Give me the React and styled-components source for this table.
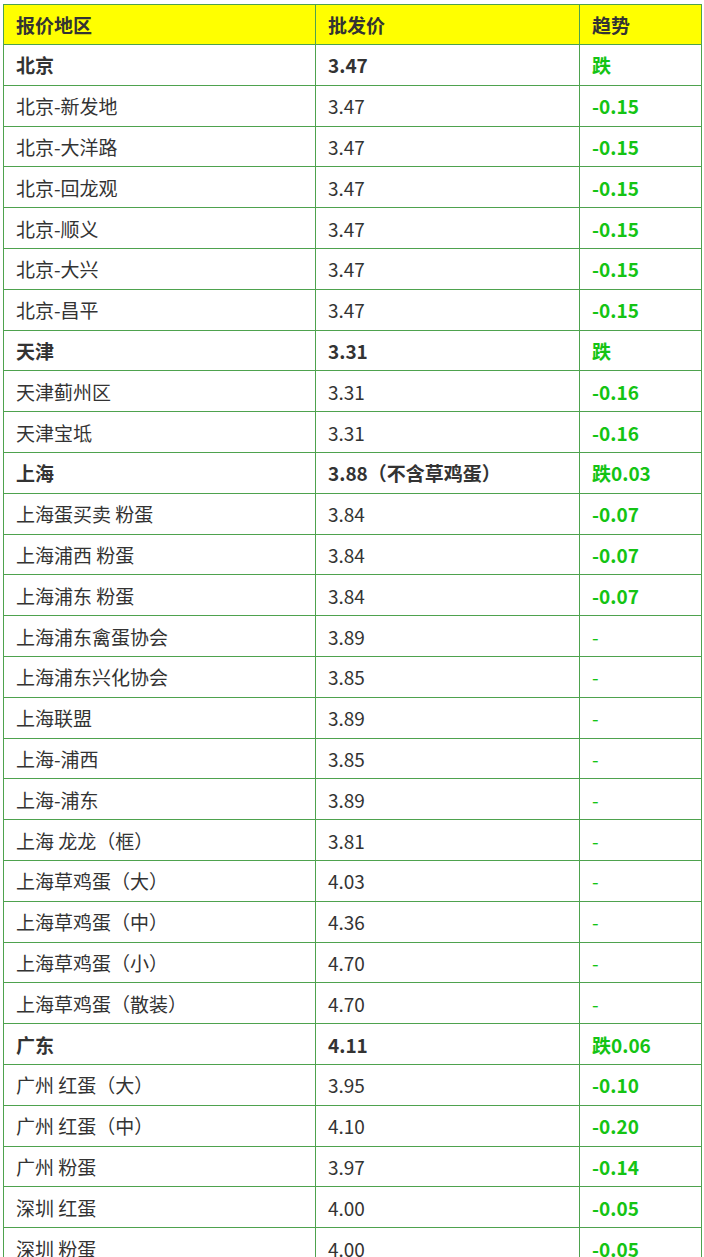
import React from 'react';
import styled, { createGlobalStyle } from 'styled-components';

const GlobalStyle = createGlobalStyle`
	body {
		margin: 0;
		background: #fff;
		font-family: "Noto Sans CJK SC", "Noto Sans", sans-serif;
	}
`;

const rows = [
	{ area: '北京', price: '3.47', trend: '跌', group: true },
	{ area: '北京-新发地', price: '3.47', trend: '-0.15' },
	{ area: '北京-大洋路', price: '3.47', trend: '-0.15' },
	{ area: '北京-回龙观', price: '3.47', trend: '-0.15' },
	{ area: '北京-顺义', price: '3.47', trend: '-0.15' },
	{ area: '北京-大兴', price: '3.47', trend: '-0.15' },
	{ area: '北京-昌平', price: '3.47', trend: '-0.15' },
	{ area: '天津', price: '3.31', trend: '跌', group: true },
	{ area: '天津蓟州区', price: '3.31', trend: '-0.16' },
	{ area: '天津宝坻', price: '3.31', trend: '-0.16' },
	{ area: '上海', price: '3.88（不含草鸡蛋）', trend: '跌0.03', group: true },
	{ area: '上海蛋买卖 粉蛋', price: '3.84', trend: '-0.07' },
	{ area: '上海浦西 粉蛋', price: '3.84', trend: '-0.07' },
	{ area: '上海浦东 粉蛋', price: '3.84', trend: '-0.07' },
	{ area: '上海浦东禽蛋协会', price: '3.89', trend: '-' },
	{ area: '上海浦东兴化协会', price: '3.85', trend: '-' },
	{ area: '上海联盟', price: '3.89', trend: '-' },
	{ area: '上海-浦西', price: '3.85', trend: '-' },
	{ area: '上海-浦东', price: '3.89', trend: '-' },
	{ area: '上海 龙龙（框）', price: '3.81', trend: '-' },
	{ area: '上海草鸡蛋（大）', price: '4.03', trend: '-' },
	{ area: '上海草鸡蛋（中）', price: '4.36', trend: '-' },
	{ area: '上海草鸡蛋（小）', price: '4.70', trend: '-' },
	{ area: '上海草鸡蛋（散装）', price: '4.70', trend: '-' },
	{ area: '广东', price: '4.11', trend: '跌0.06', group: true },
	{ area: '广州 红蛋（大）', price: '3.95', trend: '-0.10' },
	{ area: '广州 红蛋（中）', price: '4.10', trend: '-0.20' },
	{ area: '广州 粉蛋', price: '3.97', trend: '-0.14' },
	{ area: '深圳 红蛋', price: '4.00', trend: '-0.05' },
	{ area: '深圳 粉蛋', price: '4.00', trend: '-0.05' },
];

const Page = styled.div`
	padding: 4px 0 0 3px;
	width: 704px;
	box-sizing: border-box;
`;

const Table = styled.table`
	border-collapse: collapse;
	width: 698px;
	table-layout: fixed;
	color: #333;
	font-size: 19px;
`;

const HeadRow = styled.tr`
	height: 40px;
	background: #ffff00;
`;

const Row = styled.tr`
	height: 40.8px;
`;

const Th = styled.th`
	border: 1px solid #4ea24e;
	padding: 0 12px;
	text-align: left;
	font-weight: 700;
	vertical-align: middle;
`;

const Td = styled.td`
	border: 1px solid #4ea24e;
	padding: 0 12px;
	vertical-align: middle;
	white-space: nowrap;
	font-weight: ${props => props.$bold ? 700 : 400};
	color: ${props => props.$green ? '#14c414' : '#333'};
`;

export default function App() {
	return (
		<Page>
			<GlobalStyle />
			<Table>
				<colgroup>
					<col style={{ width: 312 }} />
					<col style={{ width: 264 }} />
					<col style={{ width: 122 }} />
				</colgroup>
				<thead>
					<HeadRow>
						<Th>报价地区</Th>
						<Th>批发价</Th>
						<Th>趋势</Th>
					</HeadRow>
				</thead>
				<tbody>
					{rows.map((r, i) => (
						<Row key={i}>
							<Td $bold={r.group}>{r.area}</Td>
							<Td $bold={r.group}>{r.price}</Td>
							<Td $green $bold={r.group || r.trend !== '-'}>{r.trend}</Td>
						</Row>
					))}
				</tbody>
			</Table>
		</Page>
	);
}
